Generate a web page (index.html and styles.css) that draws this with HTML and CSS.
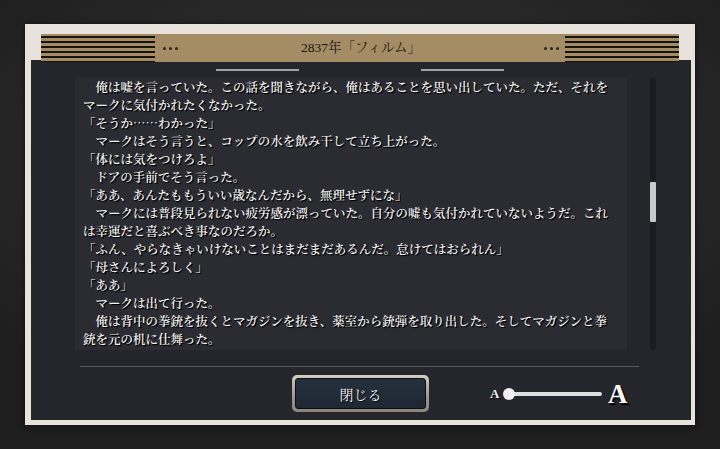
FILE: index.html
```html
<!DOCTYPE html>
<html lang="ja">
<head>
<meta charset="utf-8">
<title>2837年「フィルム」</title>
<link rel="stylesheet" href="styles.css">
</head>
<body>
<div class="frame">
  <div class="header">
    <div class="stripes"></div>
    <div class="dots dots-left"><i></i><i></i><i></i></div>
    <div class="title">2837年「フィルム」</div>
    <div class="dots dots-right"><i></i><i></i><i></i></div>
    <div class="stripes"></div>
  </div>
  <div class="panel">
    <div class="tabs"><span class="tab"></span><span class="tab"></span></div>
    <div class="content">
      <div class="text">
        <p>　俺は嘘を言っていた。この話を聞きながら、俺はあることを思い出していた。ただ、それを<br>マークに気付かれたくなかった。</p>
        <p>「そうか……わかった」</p>
        <p>　マークはそう言うと、コップの水を飲み干して立ち上がった。</p>
        <p>「体には気をつけろよ」</p>
        <p>　ドアの手前でそう言った。</p>
        <p>「ああ、あんたももういい歳なんだから、無理せずにな」</p>
        <p>　マークには普段見られない疲労感が漂っていた。自分の嘘も気付かれていないようだ。これ<br>は幸運だと喜ぶべき事なのだろか。</p>
        <p>「ふん、やらなきゃいけないことはまだまだあるんだ。怠けてはおられん」</p>
        <p>「母さんによろしく」</p>
        <p>「ああ」</p>
        <p>　マークは出て行った。</p>
        <p>　俺は背中の拳銃を抜くとマガジンを抜き、薬室から銃弾を取り出した。そしてマガジンと拳<br>銃を元の机に仕舞った。</p>
      </div>
      <div class="scroll"><div class="thumb"></div></div>
    </div>
    <div class="sep"></div>
    <div class="footer">
      <div class="btn"><div class="btn-inner">閉じる</div></div>
      <div class="slider">
        <span class="a-small">A</span>
        <div class="track"><span class="knob"></span></div>
        <span class="a-big">A</span>
      </div>
    </div>
  </div>
</div>
</body>
</html>
```
FILE: styles.css
```css
html, body {
  margin: 0;
  padding: 0;
}
body {
  width: 720px;
  height: 449px;
  overflow: hidden;
  background: radial-gradient(ellipse 70% 60% at 50% 35%, #323232 0%, #2a2a2a 50%, #1e1e1e 100%);
  font-family: "Noto Serif CJK JP", "Noto Sans CJK JP", serif;
}
.frame {
  box-sizing: border-box;
  margin: 24px 0 0 25px;
  width: 670px;
  height: 401px;
  padding: 10px 4px 5px 6px;
  background: #e7e3dc;
  display: flex;
  flex-direction: column;
  box-shadow: 0 0 6px rgba(0,0,0,0.6);
}
.header {
  position: relative;
  z-index: 1;
  height: 28px;
  margin: 0 12px -2px 10px;
  background: #a48c64;
  display: flex;
  align-items: center;
}
.stripes {
  width: 114px;
  height: 28px;
  background: repeating-linear-gradient(to bottom, #a48c64 0px, #a48c64 2px, #17140f 2px, #17140f 4px, #a48c64 4px, #a48c64 5px);
}
.dots {
  display: flex;
  gap: 3px;
}
.dots i {
  display: block;
  width: 3px;
  height: 3px;
  border-radius: 50%;
  background: #2a241b;
}
.dots-left { margin-left: 8px; }
.dots-right { margin-right: 6px; }
.title {
  flex: 1;
  text-align: center;
  font-family: "Liberation Serif", "Noto Serif CJK JP", "Noto Sans CJK JP", serif;
  font-size: 13.5px;
  color: #1a1712;
  line-height: 28px;
}
.panel {
  flex: 1;
  background: #25262b;
  display: flex;
  flex-direction: column;
}
.tabs {
  display: flex;
  gap: 122px;
  padding-left: 185px;
  margin-top: 9px;
}
.tab {
  display: block;
  width: 83px;
  height: 2px;
  background: #a2a2a8;
}
.content {
  display: flex;
  margin-top: 7px;
}
.text {
  box-sizing: border-box;
  margin-left: 44px;
  width: 552px;
  height: 272px;
  padding: 0 0 0 8px;
  background: #2b2c32;
  color: #f3f3f3;
  font-size: 12.5px;
  line-height: 18px;
  font-weight: 600;
  white-space: nowrap;
  text-shadow: 1px 1px 1px #000, 1px 1px 0 #000;
}
.text p {
  margin: 0;
}
.scroll {
  margin-left: 23px;
  width: 6px;
  height: 272px;
  background: #1b1c20;
  border-radius: 3px;
  display: flex;
  flex-direction: column;
}
.thumb {
  margin-top: 104px;
  width: 6px;
  height: 40px;
  background: #c9c9cb;
  border-radius: 1px;
}
.sep {
  margin: 16px 0 0 49px;
  width: 559px;
  height: 1px;
  background: #56575e;
}
.footer {
  display: flex;
  align-items: center;
  margin-top: 8px;
  padding-left: 261px;
}
.btn {
  box-sizing: border-box;
  width: 137px;
  height: 37px;
  padding: 3px;
  border-radius: 5px;
  background: linear-gradient(to bottom, #d2cdc1, #9a968b 60%, #8a867c);
}
.btn-inner {
  box-sizing: border-box;
  height: 100%;
  border: 1px solid #0c0e13;
  border-radius: 3px;
  background: linear-gradient(to bottom, #25303e, #1f2733);
  color: #f2f2f2;
  font-size: 14px;
  display: flex;
  align-items: center;
  justify-content: center;
  text-shadow: 1px 1px 1px #000;
}
.slider {
  display: flex;
  align-items: center;
  margin-left: 61px;
}
.a-small {
  font-family: "Liberation Serif", serif;
  font-weight: bold;
  font-size: 13px;
  color: #f2f2f2;
  text-shadow: 1px 1px 1px #000;
  width: 12px;
}
.track {
  position: relative;
  width: 98px;
  height: 4px;
  margin-left: 2px;
  background: #dedede;
  border-radius: 2px;
  display: flex;
  align-items: center;
}
.knob {
  display: block;
  width: 12px;
  height: 12px;
  margin-left: -1px;
  border-radius: 50%;
  background: #f0f0f0;
}
.a-big {
  margin-left: 6px;
  font-family: "Liberation Serif", serif;
  font-weight: bold;
  font-size: 27px;
  line-height: 26px;
  color: #f5f5f5;
  text-shadow: 2px 2px 1px #000;
}
```
